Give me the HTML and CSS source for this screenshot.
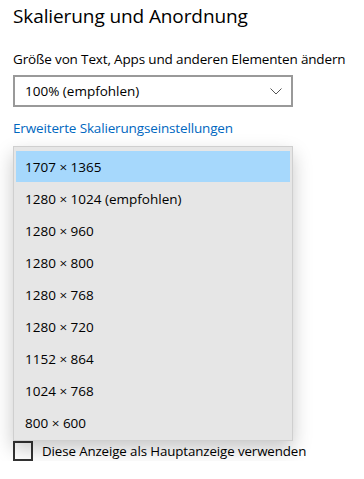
FILE: index.html
```html
<!DOCTYPE html>
<html lang="de">
<head>
    <meta charset="UTF-8">
    <meta name="viewport" content="width=device-width, initial-scale=1.0">
    <title>Skalierung und Anordnung</title>
    <link rel="stylesheet" href="styles.css">
</head>
<body>
    <div class="page">
        <h2 class="title">Skalierung und Anordnung</h2>

        <p class="label">Größe von Text, Apps und anderen Elementen ändern</p>

        <div class="select">
            <span>100% (empfohlen)</span>
            <svg class="chevron" width="12" height="7" viewBox="0 0 12 7">
                <path d="M0.5 0.5 L6 6 L11.5 0.5" fill="none" stroke="#555" stroke-width="1"/>
            </svg>
        </div>

        <a class="link" href="#">Erweiterte Skalierungseinstellungen</a>

        <div class="hidden-area">
            <!-- Auflösung dropdown (geöffnet) -->
            <ul class="popup">
                <li class="selected">1707 × 1365</li>
                <li>1280 × 1024 (empfohlen)</li>
                <li>1280 × 960</li>
                <li>1280 × 800</li>
                <li>1280 × 768</li>
                <li>1280 × 720</li>
                <li>1152 × 864</li>
                <li>1024 × 768</li>
                <li>800 × 600</li>
            </ul>
        </div>

        <label class="check">
            <span class="box"></span>
            <span>Diese Anzeige als Hauptanzeige verwenden</span>
        </label>
    </div>
</body>
</html>
```

FILE: styles.css
```css
* {
    box-sizing: border-box;
    margin: 0;
    padding: 0;
}

body {
    font-family: "Open Sans", "Noto Sans", Arial, sans-serif;
    background: #fff;
    color: #000;
}

.page {
    padding: 2px 13px 0 13px;
    display: flex;
    flex-direction: column;
    align-items: flex-start;
}

.title {
    font-size: 19px;
    font-weight: 400;
    line-height: 28px;
    letter-spacing: -0.1px;
}

.label {
    font-size: 13.5px;
    line-height: 20px;
    margin-top: 19px;
    letter-spacing: -0.15px;
}

.select {
    width: 280px;
    height: 32px;
    margin-top: 6px;
    border: 2px solid #999;
    display: flex;
    align-items: center;
    justify-content: space-between;
    padding: 0 10px 0 10px;
    font-size: 13.5px;
}

.chevron {
    margin-right: -1px;
}

.link {
    margin-top: 11px;
    color: #0067c0;
    text-decoration: none;
    font-size: 13.5px;
    line-height: 20px;
    letter-spacing: -0.15px;
}

.hidden-area {
    position: relative;
    width: 100%;
    height: 295px;
    margin-top: 8px;
}

.popup {
    position: absolute;
    left: 0;
    top: 0;
    width: 280px;
    list-style: none;
    background: #e6e6e6;
    border: 1px solid #cfcfcf;
    padding: 4px 2px 1px 2px;
    box-shadow: 0 8px 18px rgba(0, 0, 0, 0.22);
    z-index: 2;
}

.popup li {
    height: 32px;
    line-height: 31px;
    padding-left: 9px;
    padding-top: 1px;
    font-size: 13.5px;
    color: #000;
}

.popup li.selected {
    height: 31px;
    margin-bottom: 1px;
    background: #a6d8fc;
}

.check {
    display: flex;
    align-items: center;
    gap: 9px;
    font-size: 13.3px;
    letter-spacing: -0.1px;
    margin-top: 0;
}

.check .box {
    width: 20px;
    height: 20px;
    border: 2px solid #333;
}
```
